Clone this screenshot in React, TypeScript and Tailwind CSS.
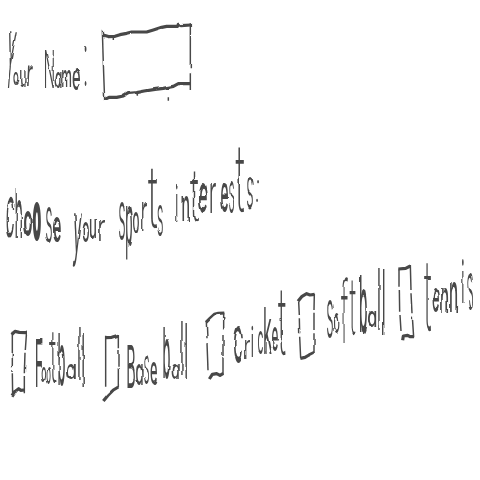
import { useMemo } from "react";

// One glyph: [character, left, right, top, bottom, weight?, lean?] in sheet coordinates.
// Lean is how far the foot of the glyph is shifted to the left.
type Glyph = [string, number, number, number, number, number?, number?];

const EM = 100;

function placeGlyph(ctx: CanvasRenderingContext2D, g: Glyph, ox: number, oy: number) {
  const [ch, left, right, top, bottom, fixed, lean = 0] = g;
  const weight = fixed ?? ("tf".includes(ch) ? 200 : "sr".includes(ch) ? 350 : "oeaumnCbp".includes(ch) ? 480 : 400);
  ctx.font = `${weight} ${EM}px Inter, "Liberation Sans", sans-serif`;
  const m = ctx.measureText(ch);
  const ascent = m.fontBoundingBoxAscent;
  const descent = m.fontBoundingBoxDescent;
  const baseline = (EM + ascent - descent) / 2;
  const inkTop = baseline - m.actualBoundingBoxAscent;
  const inkHeight = m.actualBoundingBoxAscent + m.actualBoundingBoxDescent;
  const sx = (right - left) / (m.actualBoundingBoxRight + m.actualBoundingBoxLeft);
  const sy = (bottom - top) / inkHeight;
  const shear = -lean / inkHeight;
  const tx = left - ox + m.actualBoundingBoxLeft * sx - shear * inkTop;
  const ty = top - oy - inkTop * sy;
  return { transform: `matrix(${sx},0,${shear},${sy},${tx},${ty})`, fontWeight: weight };
}

function Word({ x, y, className, glyphs }: { x: number; y: number; className: string; glyphs: Glyph[] }) {
  const styles = useMemo(() => {
    const ctx = document.createElement("canvas").getContext("2d")!;
    return glyphs.map((g) => placeGlyph(ctx, g, x, y));
  }, [glyphs, x, y]);
  return (
    <span className={`block h-[100px] shrink-0 whitespace-nowrap text-[100px] leading-none ${className}`}>
      {glyphs.map((g, i) => (
        <span key={i} className="inline-block w-0 origin-top-left" style={styles[i]}>
          {g[0]}
        </span>
      ))}
    </span>
  );
}

function Box({ className, viewBox, sides, edges }: { className: string; viewBox: string; sides: string; edges: string }) {
  return (
    <svg className={`shrink-0 overflow-visible ${className}`} viewBox={viewBox} fill="none" stroke="currentColor">
      <path d={sides} strokeWidth="4.4" />
      <path d={edges} strokeWidth="9.5" strokeLinejoin="round" />
    </svg>
  );
}

const your: Glyph[] = [["Y", 9, 17, 31, 88, 400, 4.5], ["o", 13.5, 18.5, 72, 85], ["u", 20, 25.5, 71, 87], ["r", 28, 33, 66, 86, 400, 1]];
const name: Glyph[] = [["N", 45, 54, 50, 88, 350], ["a", 55.5, 61, 72, 88], ["m", 62, 71, 70, 87], ["e", 72.5, 80, 70, 91], [":", 84.6, 86.6, 46, 86, 200]];
const choose: Glyph[] = [["C", 7, 14.5, 197, 238, 450, 1], ["h", 15.5, 22, 188, 238], ["o", 24, 32, 211, 237, 700], ["o", 33, 41, 202, 241, 900], ["s", 46, 52, 207, 243], ["e", 53, 61, 217, 243]];
const your2: Glyph[] = [["y", 74, 82, 213, 267, 400, 2], ["o", 82.5, 89, 223, 243], ["u", 90, 96, 220, 239], ["r", 99, 105, 220, 241]];
const sports: Glyph[] = [["s", 119, 125, 202, 240], ["p", 126, 132, 207, 260], ["o", 133, 139, 213, 234], ["r", 142, 147, 203, 230], ["t", 148, 157, 169, 230], ["s", 157.5, 163, 205, 236]];
const interests: Glyph[] = [["i", 176, 177.6, 183, 222], ["n", 182.5, 189, 196, 221], ["t", 190, 198, 172, 223], ["e", 199, 207, 184, 214], ["r", 210.5, 216, 183, 213], ["e", 221, 228, 182, 213], ["s", 229, 234, 181, 213], ["t", 235.5, 244, 147, 214], ["s", 247, 253, 177, 210], [":", 256, 258, 180, 202, 200]];
const football: Glyph[] = [["F", 36, 42.5, 339, 387], ["o", 41.5, 46, 366, 382], ["o", 46.5, 50.5, 367, 384], ["t", 50, 56.5, 332, 385], ["b", 58.5, 65, 333, 386], ["a", 67, 75, 364, 380], ["l", 78, 79.6, 327, 380], ["l", 82.4, 84, 333, 387]];
const baseball: Glyph[] = [["B", 127.5, 135, 345, 388], ["a", 136, 142, 365, 386], ["s", 144, 149, 355, 384], ["e", 150.5, 157, 363, 385], ["b", 163.5, 170, 327, 379], ["a", 171.5, 178, 364, 379], ["l", 181, 182.6, 321, 376], ["l", 185.4, 187, 323, 379]];
const cricket: Glyph[] = [["C", 234, 243, 326, 364], ["r", 245, 250, 340, 359], ["i", 251.5, 253.2, 325, 356], ["c", 258, 263, 332, 355], ["k", 264, 271.5, 307, 354], ["e", 272, 278, 328, 352], ["t", 278, 285.5, 290, 357]];
const softball: Glyph[] = [["s", 327, 333, 300, 338], ["o", 334, 339.5, 314, 335], ["f", 341, 348, 276, 343], ["t", 349.5, 355.5, 280, 337], ["b", 360, 367, 275, 333], ["a", 368, 375.5, 311, 327], ["l", 378, 379.6, 268, 329], ["l", 382.8, 384.4, 269, 335]];
const tennis: Glyph[] = [["t", 424, 431, 263, 332], ["e", 432.5, 439, 289, 313], ["n", 441, 448, 288, 313], ["n", 450, 457, 283, 312], ["i", 462, 463.7, 259, 303], ["s", 468, 473, 273, 310]];

export default function App() {
  return (
    <main className="flex h-[480px] w-[480px] flex-col overflow-hidden bg-white font-[Inter,'Liberation_Sans',sans-serif] text-[#484848] [filter:url(#hand)] [font-feature-settings:'cv11'] [font-kerning:none]">
      {/* Slight wobble of a pen line */}
      <svg className="absolute h-0 w-0" aria-hidden="true">
        <filter id="hand" x="0" y="0" width="1" height="1" colorInterpolationFilters="sRGB">
          <feTurbulence type="fractalNoise" baseFrequency="0.08" numOctaves="1" seed="4" result="noise" />
          <feDisplacementMap in="SourceGraphic" in2="noise" scale="3" xChannelSelector="R" yChannelSelector="G" />
        </filter>
      </svg>
      <div className="flex h-[140px] shrink-0 items-start pl-2">
        <Word x={8} y={0} className="w-[25px]" glyphs={your} />{" "}
        <Word x={45} y={0} className="ml-3 w-[42px]" glyphs={name} />
        <Box
          className="ml-[13px] mt-5 h-[84px] w-[95px]"
          viewBox="15 30 285 252"
          sides="M22 62L26 190L29 272M286 40V175M286 190V240M220 262V272M55 80V90M127 245V257"
          edges="M22 75L40 80L60 79L75 74L95 70L110 66H155L175 60L200 52L215 49H248L250 43L258 47L288 45M30 268L42 262H65L85 258L98 250L125 248L150 243L180 238L205 235L235 229L250 221H285"
        />
      </div>
      <div className="flex h-[116px] shrink-0 items-start pl-1.5">
        <Word x={6} y={140} className="w-[55px]" glyphs={choose} />{" "}
        <Word x={72} y={140} className="ml-[11px] w-[33px]" glyphs={your2} />{" "}
        <Word x={119} y={140} className="ml-3.5 w-11" glyphs={sports} />{" "}
        <Word x={176} y={140} className="ml-[13px] w-[82px]" glyphs={interests} />
      </div>
      <div className="flex h-[224px] shrink-0 items-start pl-2.5">
        <Box
          className="mt-[70px] h-[72px] w-[18px]"
          viewBox="30 48 54 216"
          sides="M37 65V172M36 180V186M37 190L38 258M80 62L76 120M75 128L73 190M73 198V250"
          edges="M35 74L45 64L58 67L79 68M36 260L48 242L56 236L62 241L73 240"
        />
        <Word x={36} y={256} className="ml-2 w-12" glyphs={football} />
        <Box
          className="ml-[18px] mt-[76px] h-[71px] w-[18px]"
          viewBox="21 81 54 213"
          sides="M32 92V245M70 87V130M69 135V185M70 190V247"
          edges="M32 98L50 97L70 91M25 288L38 272L55 255L70 246"
        />
        <Word x={127} y={256} className="ml-[7px] w-[60px]" glyphs={baseball} />
        <Box
          className="ml-[17px] mt-[54px] h-[71px] w-[22px]"
          viewBox="27 90 66 213"
          sides="M34 125L36 175M36 190L39 268M86 98V150M84 165V225M84 230V283"
          edges="M33 127L45 115L58 103L70 100L88 99M43 297L52 283L65 281L75 286L85 280"
        />
        <Word x={234} y={256} className="ml-2 w-[52px]" glyphs={cricket} />
        <Box
          className="ml-2.5 mt-[35px] h-[70px] w-5"
          viewBox="303 33 60 210"
          sides="M311 65L313 105M313 115L314 160M314 170L317 235M358 42L357 90M357 98V150M357 160V220"
          edges="M309 64L320 50L335 41L345 45L359 43M316 235L330 232L342 225L358 217"
        />
        <Word x={327} y={256} className="ml-[11px] w-[58px]" glyphs={softball} />
        <Box
          className="ml-3 mt-[7px] h-[78px] w-[18px]"
          viewBox="36 39 54 234"
          sides="M42 58V110M43 120L44 185M45 195L48 243M76 45L78 120M78 130L81 190M82 200L86 262"
          edges="M40 57L62 55L76 48M53 271L55 258L68 256L75 260L87 260"
        />
        <Word x={424} y={256} className="ml-[9px] w-[49px]" glyphs={tennis} />
      </div>
    </main>
  );
}
